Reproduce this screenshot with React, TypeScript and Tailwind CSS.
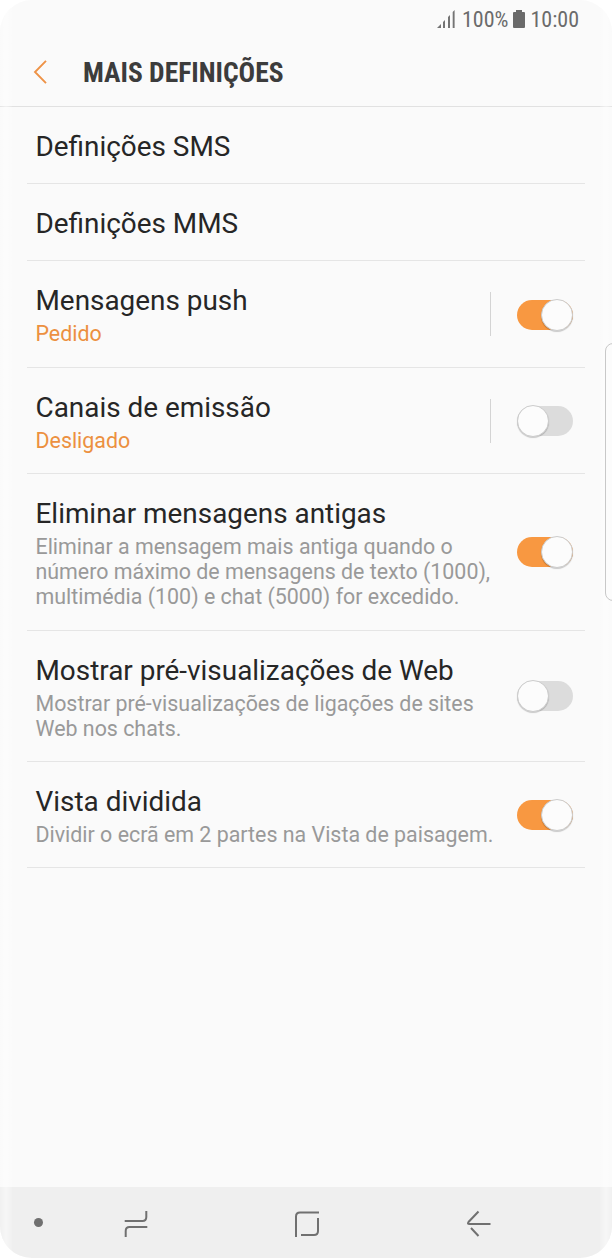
type SettingRow = {
  title: string;
  height: string;
  sub?: string[];
  subClass?: string;
  on?: boolean;
  divided?: boolean;
  toggleClass?: string;
};

const rows: SettingRow[] = [
  { title: "Definições SMS", height: "h-[77px]" },
  { title: "Definições MMS", height: "h-[77px]" },
  { title: "Mensagens push", height: "h-[107px]", sub: ["Pedido"], subClass: "text-[#ec9040]", on: true, divided: true, toggleClass: "mt-[37px]" },
  { title: "Canais de emissão", height: "h-[106px]", sub: ["Desligado"], subClass: "text-[#ec9040]", on: false, divided: true, toggleClass: "mt-[36px]" },
  {
    title: "Eliminar mensagens antigas",
    height: "h-[157px]",
    sub: ["Eliminar a mensagem mais antiga quando o", "número máximo de mensagens de texto (1000),", "multimédia (100) e chat (5000) for excedido."],
    subClass: "text-[#999999]",
    on: true,
    toggleClass: "mt-[61px]",
  },
  {
    title: "Mostrar pré-visualizações de Web",
    height: "h-[131px]",
    sub: ["Mostrar pré-visualizações de ligações de sites", "Web nos chats."],
    subClass: "text-[#999999]",
    on: false,
    toggleClass: "mt-[48px]",
  },
  { title: "Vista dividida", height: "h-[106px]", sub: ["Dividir o ecrã em 2 partes na Vista de paisagem."], subClass: "text-[#999999]", on: true, toggleClass: "mt-[36px]" },
];

function Toggle({ on }: { on: boolean }) {
  return (
    <div className="flex h-[34px] w-[56px] items-center">
      <div className={`flex h-[30px] w-[56px] items-center rounded-full ${on ? "justify-end bg-[#f89841]" : "justify-start bg-[#dcdcdc]"}`}>
        <div className="size-[32px] shrink-0 rounded-full border border-[#cccccc] bg-[#fcfcfc] shadow-[0_1px_1px_rgba(0,0,0,0.2)]" />
      </div>
    </div>
  );
}

function Row({ row }: { row: SettingRow }) {
  return (
    <div className={`mx-[27px] flex border-b border-[#e5e5e5] pl-[8.5px] ${row.height}`}>
      <div className="min-w-0 flex-1 pt-[23px] whitespace-nowrap">
        <div className="h-[33px] text-[27.9px] leading-[33px] text-[#262626]">{row.title}</div>
        {row.sub && (
          <div className={`mt-[4px] text-[21.4px] leading-[25px] ${row.subClass}`}>
            {row.sub.map((line) => (
              <div key={line}>{line}</div>
            ))}
          </div>
        )}
      </div>
      {row.divided && <div className="mt-[31px] mr-[25.5px] h-[44px] w-px bg-[#d4d4d4]" />}
      {row.on !== undefined && (
        <div className={`mr-[12.5px] ${row.toggleClass}`}>
          <Toggle on={row.on} />
        </div>
      )}
    </div>
  );
}

export default function App() {
  return (
    <div className="h-[1258px] w-[612px] bg-white font-['Roboto',sans-serif]">
      <div className="relative flex h-full w-full flex-col overflow-hidden rounded-[32px] bg-[#fafafa]">
        <header className="flex h-[107px] flex-col border-b border-[#e1e1e1]">
          <div className="flex h-[38px] items-center justify-end pr-[33px] font-['Roboto_Condensed','Roboto',sans-serif] text-[22px] text-[#6b6b6b]">
            <svg className="mr-[7px] h-[18px] w-[18px]" viewBox="0 0 18 18" fill="#747474">
              <path d="M0 18L4 14V18ZM6 12L8 10V18H6ZM11 7L13 5V18H11ZM15.7 2L17.6 0V18H15.7Z" />
            </svg>
            <span>100%</span>
            <svg className="mr-[5px] ml-[5px] h-[18px] w-[12px]" viewBox="0 0 12 18" fill="#6a6a6a">
              <path d="M3 0H9V2H11Q12 2 12 3V17Q12 18 11 18H1Q0 18 0 17V3Q0 2 1 2H3Z" />
            </svg>
            <span>10:00</span>
          </div>
          <div className="flex h-[68px] items-center pl-[33px]">
            <svg className="h-[24px] w-[15px]" viewBox="0 0 15 24" fill="none" stroke="#ee9246" strokeWidth="1.9">
              <path d="M13 .8L2 12L13 23.2" />
            </svg>
            <h1 className="mt-[2px] ml-[35px] font-['Roboto_Condensed','Roboto',sans-serif] text-[27.5px] font-bold whitespace-nowrap text-[#3c3c3c]">MAIS DEFINIÇÕES</h1>
          </div>
        </header>
        <main className="flex-1">
          {rows.map((row) => (
            <Row key={row.title} row={row} />
          ))}
        </main>
        <nav className="flex h-[71px] items-center bg-[#efefef]">
          <div className="ml-[34px] size-[9px] rounded-full bg-[#707070]" />
          <svg className="ml-[81px] h-[28px] w-[26px]" viewBox="0 0 26 28" fill="none" stroke="#707070" strokeWidth="2">
            <path d="M.7 12H18.5Q22.3 12 22.3 8V2M23.3 18H5.5Q1.7 18 1.7 22V28" />
          </svg>
          <svg className="ml-[144px] h-[28px] w-[26px]" viewBox="0 0 26 28" fill="none" stroke="#707070" strokeWidth="2">
            <path d="M2 28V7.500Q2 3.500 6 3.500H25M24 9V22Q24 26 20 26H7" />
          </svg>
          <svg className="ml-[146px] h-[28px] w-[26px]" viewBox="0 0 26 28" fill="none" stroke="#707070" strokeWidth="2">
            <path d="M12.500 2.500L2.500 13Q1 15 3.500 15H24.500M5 19L12.500 27" />
          </svg>
        </nav>
        <div className="pointer-events-none absolute inset-y-0 left-0 w-[12px] bg-linear-to-r from-white/10 via-white/50 to-white/10" />
        <div className="pointer-events-none absolute inset-y-0 right-0 w-[12px] bg-linear-to-r from-white/10 via-white/50 to-white/10" />
        <div className="absolute top-[343px] -right-[8px] h-[258px] w-[15px] rounded-l-[8px] border border-[#c8c8c8] bg-[#fcfcfc]" />
      </div>
    </div>
  );
}
